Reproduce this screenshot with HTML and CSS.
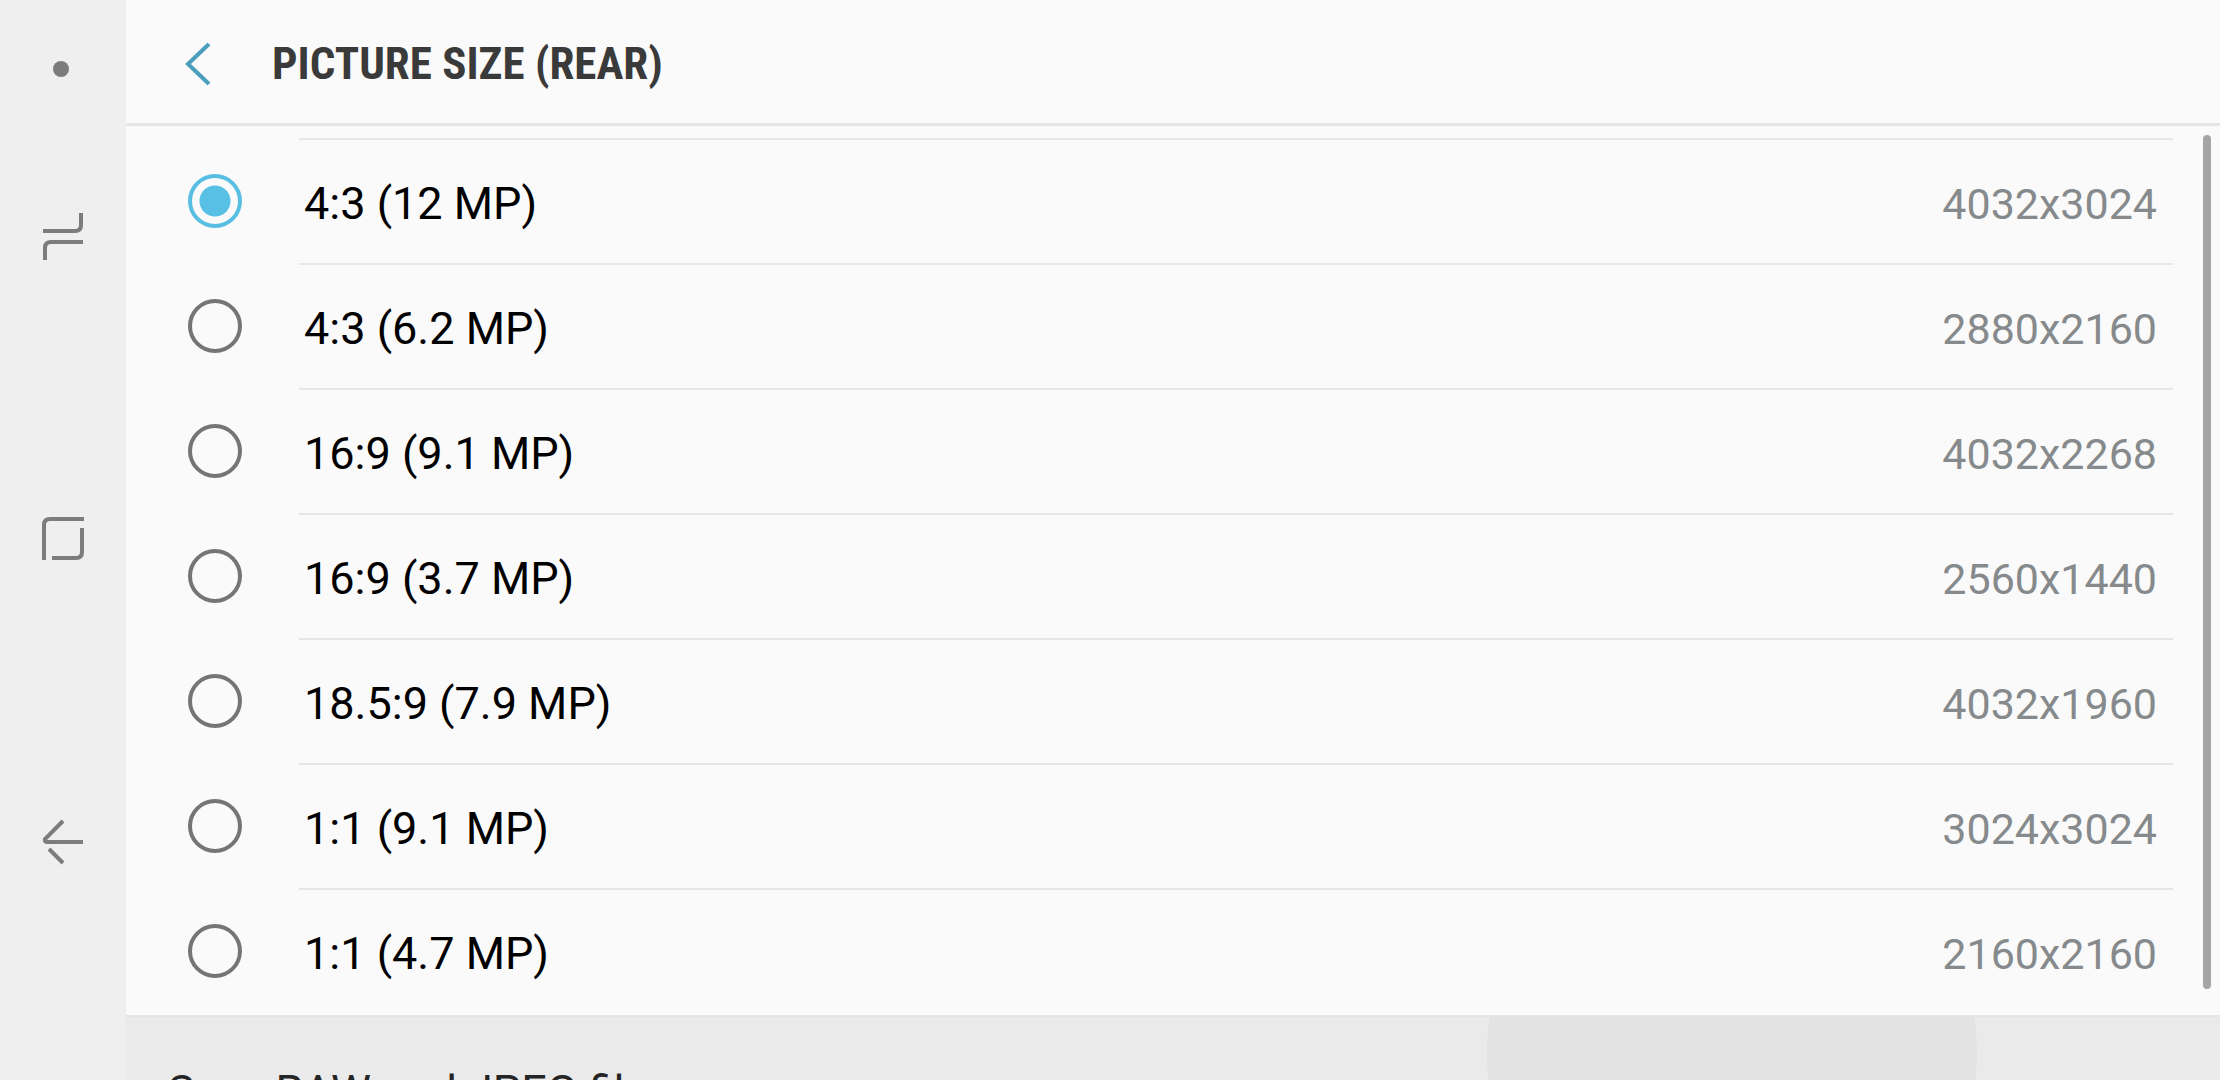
FILE: index.html
```html
<!DOCTYPE html>
<html lang="en">
<head>
    <meta charset="UTF-8">
    <meta name="viewport" content="width=device-width, initial-scale=1.0">
    <title>Picture size (rear)</title>
    <link rel="stylesheet" href="styles.css">
</head>
<body>

    <!-- System navigation bar -->
    <nav class="navbar">
        <button class="nav-button" type="button" aria-label="Show or hide navigation bar">
            <svg width="48" height="48" viewBox="0 0 48 48"><circle cx="22" cy="24" r="8" fill="currentColor"/></svg>
        </button>
        <div class="nav-group">
            <button class="nav-button" type="button" aria-label="Recents">
                <svg class="line-icon" width="48" height="48" viewBox="0 0 48 48"><path d="M4 18H36Q42 18 42 12V0M44 29H12Q6 29 6 35V47"/></svg>
            </button>
            <button class="nav-button" type="button" aria-label="Home">
                <svg class="line-icon" width="48" height="48" viewBox="0 0 48 48"><path d="M45 4H11Q5 4 5 10V45M13 43H37Q43 43 43 37V13"/></svg>
            </button>
            <button class="nav-button" type="button" aria-label="Back">
                <svg class="line-icon" width="48" height="48" viewBox="0 0 48 48"><path d="M24 4L6 22Q5 25 8 25H44M10 32L24 46"/></svg>
            </button>
        </div>
    </nav>

    <main class="screen">
        <header class="header">
            <button class="back-button" type="button" aria-label="Navigate up">
                <svg width="28" height="44" viewBox="0 0 28 44"><path d="M25 2L4 22L25 42"/></svg>
            </button>
            <h1 class="title">PICTURE SIZE (REAR)</h1>
        </header>

        <form class="sizes">
            <div class="size-row">
                <input type="radio" name="size" id="size-1" checked>
                <label for="size-1"><span>4:3 (12 MP)</span><span class="resolution">4032x3024</span></label>
            </div>
            <div class="size-row">
                <input type="radio" name="size" id="size-2">
                <label for="size-2"><span>4:3 (6.2 MP)</span><span class="resolution">2880x2160</span></label>
            </div>
            <div class="size-row">
                <input type="radio" name="size" id="size-3">
                <label for="size-3"><span>16:9 (9.1 MP)</span><span class="resolution">4032x2268</span></label>
            </div>
            <div class="size-row">
                <input type="radio" name="size" id="size-4">
                <label for="size-4"><span>16:9 (3.7 MP)</span><span class="resolution">2560x1440</span></label>
            </div>
            <div class="size-row">
                <input type="radio" name="size" id="size-5">
                <label for="size-5"><span>18.5:9 (7.9 MP)</span><span class="resolution">4032x1960</span></label>
            </div>
            <div class="size-row">
                <input type="radio" name="size" id="size-6">
                <label for="size-6"><span>1:1 (9.1 MP)</span><span class="resolution">3024x3024</span></label>
            </div>
            <div class="size-row">
                <input type="radio" name="size" id="size-7">
                <label for="size-7"><span>1:1 (4.7 MP)</span><span class="resolution">2160x2160</span></label>
            </div>
            <div class="scrollbar"></div>
        </form>

        <section class="raw-option">
            <div class="ripple"></div>
            <div class="raw-text">Save RAW and JPEG files</div>
        </section>
    </main>

</body>
</html>
```
FILE: styles.css
```css
* {
    box-sizing: border-box;
}

body {
    font-family: Roboto, sans-serif;
    margin: 0;
    height: 100vh;
    display: flex;
    overflow: hidden;
    background-color: #fafafa;
    color: #000;
}

button {
    border: 0;
    padding: 0;
    background: none;
    color: inherit;
    cursor: pointer;
}

svg {
    display: block;
}

/* Navigation bar */
.navbar {
    flex: 0 0 126px;
    display: flex;
    flex-direction: column;
    gap: 68px;
    padding-top: 19px;
    background-color: #efefef;
    color: #7c7c7c;
}

.nav-group {
    display: flex;
    flex-direction: column;
    gap: 202px;
}

.nav-button {
    height: 100px;
    display: flex;
    justify-content: center;
    align-items: center;
}

.line-icon {
    fill: none;
    stroke: currentColor;
    stroke-width: 4;
}

.screen {
    flex: 1;
    min-width: 0;
    display: flex;
    flex-direction: column;
}

/* Header */
.header {
    flex-shrink: 0;
    height: 126px;
    display: flex;
    align-items: center;
    gap: 60px;
    padding: 4px 0 0 58px;
    border-bottom: 3px solid #e6e6e6;
}

.back-button svg {
    fill: none;
    stroke: #4b9fbd;
    stroke-width: 4;
}

.title {
    margin: 0;
    font-family: "Roboto Condensed", "Liberation Sans Narrow", Roboto, sans-serif;
    font-size: 45px;
    font-weight: 700;
    color: #3a3a3a;
}

/* List of sizes */
.sizes {
    position: relative;
    flex-shrink: 0;
    padding: 12px 47px 2px 62px;
}

.size-row {
    display: flex;
    align-items: center;
    gap: 57px;
}

.size-row input {
    appearance: none;
    flex: none;
    width: 54px;
    height: 54px;
    margin: 0;
    border: 4px solid #757575;
    border-radius: 50%;
}

.size-row input:checked {
    border-color: #58bfe2;
    background: radial-gradient(circle, #58c0e4 15px, transparent 16px);
}

.size-row label {
    flex: 1;
    height: 125px;
    display: flex;
    justify-content: space-between;
    align-items: center;
    padding: 4px 16px 0 5px;
    border-top: 2px solid #e6e6e6;
    font-size: 45px;
}

.resolution {
    font-size: 43px;
    color: #868a8c;
}

/* Sits over the right edge of the list */
.scrollbar {
    position: absolute;
    top: 9px;
    right: 9px;
    bottom: 26px;
    width: 8px;
    border-radius: 4px;
    background-color: #a5a5a5;
}

/* Next setting, cut off by the bottom of the screen */
.raw-option {
    position: relative;
    flex: 1;
    min-height: 0;
    overflow: hidden;
    padding: 48px 42px 0;
    border-top: 2px solid #e5e5e5;
    background-color: #eaeaea;
}

.raw-text {
    position: relative;
    font-size: 45px;
    color: #252525;
}

/* Touch feedback */
.ripple {
    position: absolute;
    top: -210px;
    right: 243px;
    width: 490px;
    height: 490px;
    border-radius: 50%;
    background-color: #e3e3e3;
}
```
